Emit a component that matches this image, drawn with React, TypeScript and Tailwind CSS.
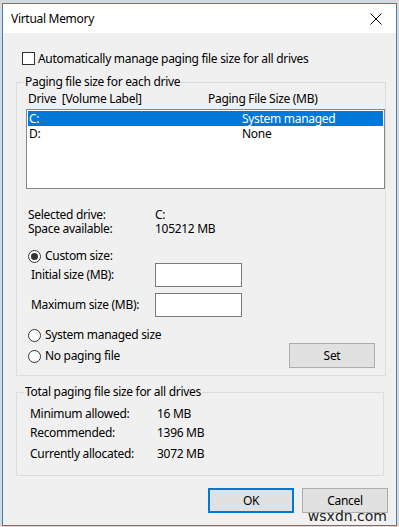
import React from 'react'

const font = { fontFamily: '"Noto Sans", "Open Sans", sans-serif' }

function Radio({ checked }: { checked?: boolean }) {
  return (
    <span className="flex h-[13px] w-[13px] shrink-0 items-center justify-center rounded-full border border-[#333] bg-white">
      {checked ? <span className="h-[7px] w-[7px] rounded-full bg-[#333]" /> : null}
    </span>
  )
}

function Button({ label, primary, className = '' }: { label: string; primary?: boolean; className?: string }) {
  return (
    <div
      className={[
        'flex h-[25px] w-[86px] items-center justify-center bg-[#e1e1e1] text-[12px] text-black',
        primary ? 'border-2 border-[#0078d7]' : 'border border-[#adadad]',
        className,
      ].join(' ')}
    >
      {label}
    </div>
  )
}

export default function App() {
  return (
    <div className="h-[527px] w-[399px] overflow-hidden bg-[#d9d9d9] pl-[2px] pt-[3px]" style={font}>
      <div className="relative flex h-[523px] w-[395px] flex-col border border-[#3a7fc1] text-[12px] leading-[14px] tracking-[-0.3px] text-black">
        {/* title bar */}
        <div className="flex h-[29px] shrink-0 items-center justify-between bg-white pl-[8px] pr-[14px]">
          <span className="text-[12px]">Virtual Memory</span>
          <svg width="12" height="12" viewBox="0 0 12 12" className="text-black">
            <path d="M0.5 0.5 L11.5 11.5 M11.5 0.5 L0.5 11.5" stroke="currentColor" strokeWidth="1" />
          </svg>
        </div>

        {/* body */}
        <div className="flex flex-1 flex-col bg-[#f0f0f0] px-[13px]">
          <div className="mt-[19px] flex h-[13px] items-center gap-[3px] pl-[6px]">
            <span className="h-[13px] w-[13px] shrink-0 border border-[#333] bg-white" />
            <span>Automatically manage paging file size for all drives</span>
          </div>

          {/* group 1 */}
          <fieldset className="mt-[10px] h-[301px] w-[368px] border border-[#dcdcdc] pl-[9px]">
            <legend className="-ml-[2px] px-[1px] leading-[14px]">Paging file size for each drive</legend>
            <div className="mt-[2px] flex h-[16px] items-center pl-[2px]">
              <span className="w-[180px]">Drive&nbsp; [Volume Label]</span>
              <span>Paging File Size (MB)</span>
            </div>
            <div className="mt-[2px] h-[80px] w-[359px] border border-[#828790] bg-white p-[1px]">
              <div className="flex h-[15px] items-center bg-[#0078d7] pl-[1px] text-white">
                <span className="w-[213px]">C:</span>
                <span>System managed</span>
              </div>
              <div className="flex h-[15px] items-center pl-[1px]">
                <span className="w-[213px]">D:</span>
                <span>None</span>
              </div>
            </div>

            <div className="mt-[19px] flex h-[14px] items-center pl-[2px]">
              <span className="w-[127px]">Selected drive:</span>
              <span>C:</span>
            </div>
            <div className="flex h-[14px] items-center pl-[2px]">
              <span className="w-[127px]">Space available:</span>
              <span>105212 MB</span>
            </div>

            <div className="mt-[13px] flex h-[14px] items-center gap-[4px] pl-[2px]">
              <Radio checked />
              <span>Custom size:</span>
            </div>
            <div className="flex h-[24px] items-center pl-[5px]">
              <span className="w-[124px]">Initial size (MB):</span>
              <span className="h-[24px] w-[87px] border border-[#7a7a7a] bg-white" />
            </div>
            <div className="mt-[6px] flex h-[24px] items-center pl-[5px]">
              <span className="w-[124px]">Maximum size (MB):</span>
              <span className="h-[24px] w-[87px] border border-[#7a7a7a] bg-white" />
            </div>

            <div className="flex items-start">
              <div className="flex flex-col pl-[2px]">
                <div className="mt-[11px] flex h-[14px] items-center gap-[4px]">
                  <Radio />
                  <span>System managed size</span>
                </div>
                <div className="mt-[7px] flex h-[14px] items-center gap-[4px]">
                  <Radio />
                  <span>No paging file</span>
                </div>
              </div>
              <Button label="Set" className="ml-auto mr-[10px] mt-[26px] h-[24px]" />
            </div>
          </fieldset>

          {/* group 2 */}
          <fieldset className="mt-[9px] h-[91px] w-[368px] border border-[#dcdcdc] pl-[13px]">
            <legend className="-ml-[6px] px-[1px] leading-[14px]">Total paging file size for all drives</legend>
            <div className="mt-[8px] flex h-[14px] items-center">
              <span className="w-[127px]">Minimum allowed:</span>
              <span>16 MB</span>
            </div>
            <div className="mt-[5px] flex h-[14px] items-center">
              <span className="w-[127px]">Recommended:</span>
              <span>1396 MB</span>
            </div>
            <div className="mt-[7px] flex h-[14px] items-center">
              <span className="w-[127px]">Currently allocated:</span>
              <span>3072 MB</span>
            </div>
          </fieldset>

          <div className="-mr-[5px] mt-[12px] flex justify-end gap-[8px]">
            <Button label="OK" primary />
            <Button label="Cancel" />
          </div>
        </div>

        <span
          className="absolute bottom-[2px] right-[9px] text-[14px] leading-[13px] tracking-normal text-[#222]"
          style={{ fontFamily: '"DejaVu Sans", sans-serif' }}
        >
          wsxdn.com
        </span>
      </div>
    </div>
  )
}
